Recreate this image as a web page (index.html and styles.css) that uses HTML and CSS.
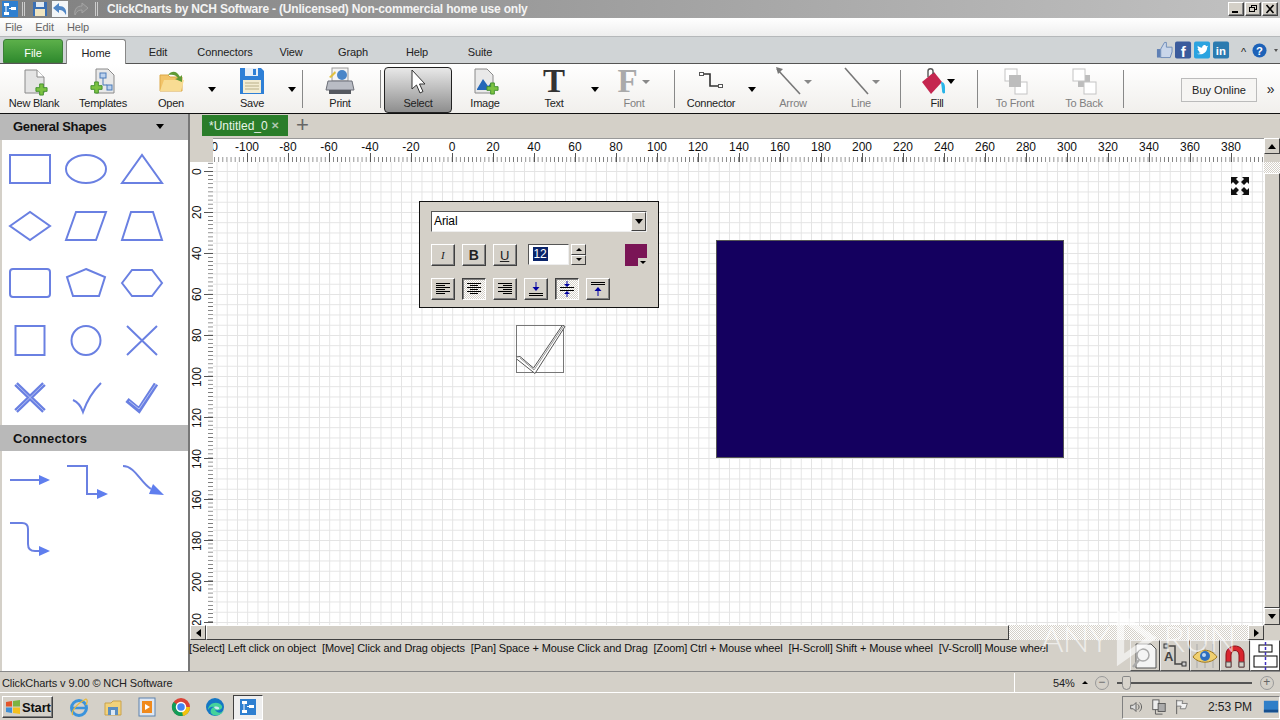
FILE: index.html
```html
<!DOCTYPE html>
<html>
  <head>
    <meta charset="UTF-8" />
    <title>ClickCharts</title>
    <link rel="stylesheet" href="styles.css">
  </head>

  <body>
    <svg class="defs" width="0" height="0">
      <symbol id="app-icon" viewBox="0 0 16 16">
        <rect width="16" height="16" fill="#2f7fd0"/>
        <rect x="2" y="2" width="5" height="3" fill="#fff"/>
        <rect x="9" y="6" width="5" height="3" fill="#fff"/>
        <rect x="2" y="11" width="5" height="3" fill="#fff"/>
        <path d="M4 5V11M7 7.5H9" stroke="#fff"/>
      </symbol>
      <symbol id="plus" viewBox="0 0 14 14">
        <path d="M5 1H9V5H13V9H9V13H5V9H1V5H5Z" fill="#7cc242" stroke="#3f8f2a"/>
      </symbol>
    </svg>

    <div class="app">
      <div class="titlebar">
        <svg class="tb-icon" viewBox="0 0 16 16"><use href="#app-icon"/></svg>
        <span class="tb-sep"></span>
        <svg class="tb-icon" viewBox="0 0 16 16">
          <rect x="1" y="1" width="14" height="14" fill="#3a6fb5"/>
          <rect x="4" y="1" width="8" height="5" fill="#dfe8f2"/>
          <rect x="3" y="8" width="10" height="7" fill="#f0e4c0"/>
        </svg>
        <svg class="tb-icon tb-undo" viewBox="0 0 16 16">
          <rect width="16" height="16" fill="#f2f5f8"/>
          <path d="M1 7L7 2V5C12 5 15 8 14 14C12 10 10 9 7 9V12Z" fill="#4f86c6"/>
        </svg>
        <svg class="tb-icon" viewBox="0 0 16 16">
          <path d="M15 7L9 2V5C4 5 1 8 2 14C4 10 6 9 9 9V12Z" fill="#8b8b8b" stroke="#a5a5a5"/>
        </svg>
        <span class="tb-sep tb-sep-last"></span>
        <span class="title-text">ClickCharts by NCH Software - (Unlicensed) Non-commercial home use only</span>
        <div class="win-btns">
          <button class="win-btn"><svg viewBox="0 0 12 10"><rect x="2" y="7" width="6" height="2"/></svg></button>
          <button class="win-btn"><svg viewBox="0 0 12 10"><path d="M4 1H10V6H8V8H2V3H4ZM5 2V3H8V5H9V2ZM3 4V7H7V4Z" fill-rule="evenodd"/></svg></button>
          <button class="win-btn"><svg viewBox="0 0 12 10"><path d="M2.5 1L9.5 9M9.5 1L2.5 9" stroke="#000" stroke-width="1.6"/></svg></button>
        </div>
      </div>

      <div class="menubar">
        <span>File</span>
        <span>Edit</span>
        <span>Help</span>
      </div>

      <div class="ribbon-tabs">
        <span class="rtab rtab-file">File</span>
        <span class="rtab rtab-home">Home</span>
        <span class="rtab rtab-edit">Edit</span>
        <span class="rtab rtab-conn">Connectors</span>
        <span class="rtab rtab-view">View</span>
        <span class="rtab rtab-graph">Graph</span>
        <span class="rtab rtab-help">Help</span>
        <span class="rtab rtab-suite">Suite</span>
        <div class="social">
          <svg viewBox="0 0 18 18"><path d="M1 8H5V17H1Z" fill="#5f80b5"/><path d="M5 8L9 1H11V6H17V11L15 17H5Z" fill="#c9d6ea" stroke="#6d8bb8"/></svg>
          <svg viewBox="0 0 18 18"><rect width="17" height="18" rx="2" fill="#3b5b9c"/><text x="6" y="16" class="social-f">f</text></svg>
          <svg viewBox="0 0 18 18"><rect width="17" height="18" rx="2" fill="#2aa3e0"/><path d="M3 13C8 15 14 12 14 6L15 4.500L13 5C12 3 9 3 8.500 6.500C6.500 6.500 5 5.500 4 4.500C3.500 6 4 7.500 5 8L3.800 8C4 9.500 5 10 6 10.500L5 10.700C5.500 11.500 6 12 7 12C6 13 4.500 13.200 3 13Z" fill="#fff"/></svg>
          <svg viewBox="0 0 18 18"><rect width="17" height="18" rx="2" fill="#2c7bb0"/><text x="3" y="14" class="social-in">in</text></svg>
          <span class="caret-up">^</span>
          <svg class="help-icon" viewBox="0 0 16 16"><circle cx="8" cy="8" r="7.500" fill="#1d62b8"/><text x="8" y="12.500" class="help-q">?</text></svg>
          <span class="tri tri-small"></span>
        </div>
      </div>

      <div class="toolbar">
        <div class="tool">
          <div class="tool-icon">
            <svg width="32" height="30" viewBox="0 0 32 30">
              <path d="M7 4H19L26 11V27H7Z" fill="#e4e4e4" stroke="#8a8a8a"/>
              <path d="M19 4V11H26" fill="#fff" stroke="#8a8a8a"/>
              <use href="#plus" x="17" y="17" width="13" height="13"/>
            </svg>
          </div>
          <span>New Blank</span>
        </div>
        <div class="tool">
          <div class="tool-icon">
            <svg width="32" height="30" viewBox="0 0 32 30">
              <path d="M9 3H21L27 9V27H9Z" fill="#e8e8e8" stroke="#8a8a8a"/>
              <rect x="13" y="7" width="6" height="5" fill="#bcd2ee" stroke="#4a7ab8"/>
              <rect x="20" y="19" width="5" height="5" fill="#bcd2ee" stroke="#4a7ab8"/>
              <path d="M16 12V19H20" fill="none" stroke="#4a7ab8"/>
              <use href="#plus" x="3" y="15" width="13" height="13"/>
            </svg>
          </div>
          <span>Templates</span>
        </div>
        <div class="tool">
          <div class="tool-icon">
            <svg width="32" height="30" viewBox="0 0 32 30">
              <path d="M5 9H13L15 11H27V25H5Z" fill="#f2c469" stroke="#dca848"/>
              <path d="M5 25L9 14H29L26 25Z" fill="#f8dc93"/>
              <path d="M13 9C17 4 22 5 25 11L27 9L27 16L20 13L23 12C21 9 18 8 13 9Z" fill="#5f9a35"/>
            </svg>
          </div>
          <span>Open</span>
        </div>
        <span class="tri"></span>
        <div class="tool">
          <div class="tool-icon">
            <svg width="32" height="30" viewBox="0 0 32 30">
              <path d="M4 2H25L28 5V28H4Z" fill="#2e7fd6"/>
              <rect x="9" y="2" width="13" height="8" fill="#e6eef7"/>
              <rect x="17" y="3" width="3" height="6" fill="#2e7fd6"/>
              <rect x="7" y="14" width="18" height="13" fill="#f3ecd2"/>
              <path d="M9 17H23M9 20H23M9 23H23" stroke="#b9b08a"/>
            </svg>
          </div>
          <span>Save</span>
        </div>
        <span class="tri"></span>
        <span class="tool-sep"></span>
        <div class="tool">
          <div class="tool-icon">
            <svg width="32" height="30" viewBox="0 0 32 30">
              <rect x="8" y="2" width="16" height="13" fill="#f4f4f4" stroke="#9a9a9a"/>
              <circle cx="18" cy="9" r="5" fill="#4a86c8"/>
              <path d="M4 15H28L30 24H2Z" fill="#b9bcc4" stroke="#6c6f78"/>
              <rect x="5" y="24" width="22" height="4" fill="#55585f"/>
              <path d="M5 11L11 5L12 7L7 12Z" fill="#e0c040"/>
            </svg>
          </div>
          <span>Print</span>
        </div>
        <span class="tool-sep"></span>
        <div class="tool tool-active">
          <div class="tool-icon">
            <svg width="32" height="30" viewBox="0 0 32 30">
              <path d="M10 3V22L14.500 18L18 26L21 24.500L17.500 17H23Z" fill="#fff" stroke="#333"/>
            </svg>
          </div>
          <span>Select</span>
        </div>
        <div class="tool">
          <div class="tool-icon">
            <svg width="32" height="30" viewBox="0 0 32 30">
              <path d="M6 3H18L24 9V27H6Z" fill="#e9e9e9" stroke="#8a8a8a"/>
              <path d="M8 23L14 13L19 20L22 17V24H8Z" fill="#2467b8"/>
              <use href="#plus" x="17" y="16" width="13" height="13"/>
            </svg>
          </div>
          <span>Image</span>
        </div>
        <div class="tool">
          <div class="tool-icon"><span class="glyph-t">T</span></div>
          <span>Text</span>
        </div>
        <span class="tri"></span>
        <div class="tool tool-off">
          <div class="tool-icon tool-icon-dd"><span class="glyph-f">F</span><span class="tri tri-gray"></span></div>
          <span>Font</span>
        </div>
        <span class="tool-sep"></span>
        <div class="tool">
          <div class="tool-icon">
            <svg width="26" height="20" viewBox="0 0 26 20">
              <path d="M5 3H12V15H21" fill="none" stroke="#333" stroke-width="1.600"/>
              <rect x="1.500" y="1.500" width="4" height="3" fill="#fff" stroke="#555"/>
              <rect x="20.500" y="13.500" width="4" height="3" fill="#fff" stroke="#555"/>
            </svg>
          </div>
          <span>Connector</span>
        </div>
        <span class="tri"></span>
        <div class="tool tool-off">
          <div class="tool-icon tool-icon-dd">
            <svg width="28" height="30" viewBox="0 0 28 30">
              <path d="M2 3L25 28" stroke="#777" stroke-width="1.600"/>
              <path d="M1 1L8 3L3 8Z" fill="#777"/>
            </svg>
            <span class="tri tri-gray"></span>
          </div>
          <span>Arrow</span>
        </div>
        <div class="tool tool-off">
          <div class="tool-icon tool-icon-dd">
            <svg width="28" height="30" viewBox="0 0 28 30">
              <path d="M2 2L25 28" stroke="#777" stroke-width="1.600"/>
            </svg>
            <span class="tri tri-gray"></span>
          </div>
          <span>Line</span>
        </div>
        <span class="tool-sep"></span>
        <div class="tool">
          <div class="tool-icon tool-icon-dd">
            <svg width="26" height="30" viewBox="0 0 26 30">
              <path d="M2 16L14 6L22 16L11 28Z" fill="#c5264f"/>
              <path d="M8 11V5C8 2 13 2 13 5V8" fill="none" stroke="#555" stroke-width="1.400"/>
              <path d="M21 16C26 16 25 22 25 27C23 28 22 27 22 24Z" fill="#29b4e8"/>
            </svg>
            <span class="tri"></span>
          </div>
          <span>Fill</span>
        </div>
        <span class="tool-sep"></span>
        <div class="tool tool-off">
          <div class="tool-icon">
            <svg width="32" height="30" viewBox="0 0 32 30">
              <rect x="6" y="3" width="12" height="12" fill="#fff" stroke="#c4c4c4"/>
              <rect x="16" y="16" width="12" height="12" fill="#fff" stroke="#c4c4c4"/>
              <rect x="10" y="9" width="12" height="12" fill="#bdbdbd"/>
            </svg>
          </div>
          <span>To Front</span>
        </div>
        <div class="tool tool-off">
          <div class="tool-icon">
            <svg width="32" height="30" viewBox="0 0 32 30">
              <rect x="10" y="9" width="12" height="12" fill="#bdbdbd"/>
              <rect x="5" y="3" width="12" height="12" fill="#fff" stroke="#c4c4c4"/>
              <rect x="16" y="16" width="12" height="12" fill="#fff" stroke="#c4c4c4"/>
            </svg>
          </div>
          <span>To Back</span>
        </div>
        <span class="tool-sep"></span>
        <span></span>
        <button class="buy-btn">Buy Online</button>
        <span></span>
        <span class="more">»</span>
      </div>

      <div class="main">
        <aside class="sidebar">
          <div class="side-head">General Shapes<span class="tri"></span></div>
          <div class="shape-grid">
            <svg viewBox="0 0 44 44"><rect x="2" y="8" width="40" height="28"/></svg>
            <svg viewBox="0 0 44 44"><ellipse cx="22" cy="22" rx="20" ry="14"/></svg>
            <svg viewBox="0 0 44 44"><path d="M2 36L22 8L42 36Z"/></svg>
            <svg viewBox="0 0 44 44"><path d="M2 22L22 8L42 22L22 36Z"/></svg>
            <svg viewBox="0 0 44 44"><path d="M2 36L12 8H42L32 36Z"/></svg>
            <svg viewBox="0 0 44 44"><path d="M2 36L11 8H33L42 36Z"/></svg>
            <svg viewBox="0 0 44 44"><rect x="2" y="8" width="40" height="28" rx="3"/></svg>
            <svg viewBox="0 0 44 44"><path d="M22 8L41 16L35 35H9L3 16Z"/></svg>
            <svg viewBox="0 0 44 44"><path d="M2 22L12 9H32L42 22L32 35H12Z"/></svg>
            <svg viewBox="0 0 44 44"><rect x="7.500" y="8" width="29" height="29"/></svg>
            <svg viewBox="0 0 44 44"><circle cx="22" cy="22.500" r="14.500"/></svg>
            <svg viewBox="0 0 44 44"><path d="M7 8L37 37M37 8L7 37"/></svg>
            <svg viewBox="0 0 44 44"><path class="thick" d="M8 9L36 36M36 9L8 36"/><path class="core" d="M8 9L36 36M36 9L8 36"/></svg>
            <svg viewBox="0 0 44 44"><path d="M9 25Q16 28 19 37Q25 20 37 8"/></svg>
            <svg viewBox="0 0 44 44"><path class="thick" d="M7 25L19 35L36 9"/><path class="core" d="M9 26L19 34L36 9"/></svg>
          </div>
          <div class="side-head side-head-conn">Connectors</div>
          <div class="shape-grid">
            <svg viewBox="0 0 44 44"><path d="M2 22H32"/><path class="head" d="M31 17L42 22L31 27Z"/></svg>
            <svg viewBox="0 0 44 44"><path d="M3 8H23V36H33"/><path class="head" d="M33 31L44 36L33 41Z"/></svg>
            <svg viewBox="0 0 44 44"><path d="M3 8C15 8 20 24 31 31"/><path class="head" d="M33 26L44 37L29 36Z"/></svg>
            <svg viewBox="0 0 44 44"><path d="M2 8H14Q20 8 20 14V29Q20 36 27 36H32"/><path class="head" d="M31 31L42 36L31 41Z"/></svg>
          </div>
        </aside>

        <div class="work">
          <div class="doc-tabs">
            <div class="doc-tab">*Untitled_0<span class="doc-close">✕</span></div>
            <span class="doc-add">+</span>
          </div>

          <div class="ruler-row">
            <div class="ruler-corner"></div>
            <div class="ruler-h">
              <span>-120</span><span>-100</span><span>-80</span><span>-60</span><span>-40</span><span>-20</span><span>0</span>
              <span>20</span><span>40</span><span>60</span><span>80</span><span>100</span><span>120</span><span>140</span>
              <span>160</span><span>180</span><span>200</span><span>220</span><span>240</span><span>260</span><span>280</span>
              <span>300</span><span>320</span><span>340</span><span>360</span><span>380</span>
            </div>
            <div class="vscroll-btn-up"><span class="arr-up"></span></div>
          </div>

          <div class="canvas-row">
            <div class="ruler-v">
              <span>0</span><span>20</span><span>40</span><span>60</span><span>80</span><span>100</span>
              <span>120</span><span>140</span><span>160</span><span>180</span><span>200</span><span>220</span>
            </div>

            <div class="canvas">
              <div class="format-panel">
                <div class="combo">
                  <span class="combo-text">Arial</span>
                  <span class="combo-arrow"><span class="arr-down"></span></span>
                </div>
                <div class="fp-row">
                  <button class="fp-btn fp-i">I</button>
                  <button class="fp-btn fp-b">B</button>
                  <button class="fp-btn fp-u">U</button>
                  <div class="size-box"><span class="size-sel">12</span></div>
                  <div class="spin">
                    <span class="spin-btn"><span class="arr-up arr-tiny"></span></span>
                    <span class="spin-btn"><span class="arr-down arr-tiny"></span></span>
                  </div>
                  <div class="swatch"><span class="swatch-dd"><span class="arr-down arr-tiny"></span></span></div>
                </div>
                <div class="fp-row">
                  <button class="fp-btn">
                    <svg viewBox="0 0 16 14"><path d="M1 1.500H15M1 3.500H10M1 5.500H15M1 7.500H10M1 9.500H15M1 11.500H10" stroke="#000"/></svg>
                  </button>
                  <button class="fp-btn fp-on">
                    <svg viewBox="0 0 16 14"><path d="M1 1.500H15M4 3.500H12M1 5.500H15M4 7.500H12M1 9.500H15M4 11.500H12" stroke="#000"/></svg>
                  </button>
                  <button class="fp-btn">
                    <svg viewBox="0 0 16 14"><path d="M1 1.500H15M6 3.500H15M1 5.500H15M6 7.500H15M1 9.500H15M6 11.500H15" stroke="#000"/></svg>
                  </button>
                  <button class="fp-btn">
                    <svg viewBox="0 0 16 16"><path d="M1 12.500H15M1 14.500H15" stroke="#000"/><path d="M8 1V9" stroke="#0000a0"/><path d="M4.500 6H11.500L8 10Z" fill="#0000a0"/></svg>
                  </button>
                  <button class="fp-btn fp-on">
                    <svg viewBox="0 0 16 16"><path d="M1 6.500H15M1 9.500H15" stroke="#000"/><path d="M8 0V5M8 11V16" stroke="#0000a0"/><path d="M5 3H11L8 6ZM5 13H11L8 10Z" fill="#0000a0"/></svg>
                  </button>
                  <button class="fp-btn">
                    <svg viewBox="0 0 16 16"><path d="M1 1.500H15M1 3.500H15" stroke="#000"/><path d="M8 7V15" stroke="#0000a0"/><path d="M4.500 10H11.500L8 6Z" fill="#0000a0"/></svg>
                  </button>
                </div>
              </div>

              <div class="check-object">
                <svg width="50" height="50" viewBox="0 0 50 50">
                  <path d="M0 32L4 31.500L17.500 43L46.500 0L49 1.500L19 48.500L0 33.500Z" fill="#fff" stroke="#555"/>
                  <path d="M4 33L18 45L47.500 1" fill="none" stroke="#999"/>
                </svg>
              </div>

              <div class="navy-rect"></div>

              <svg class="fit-icon" viewBox="0 0 20 20">
                <path d="M1 1H8L6 3L9 6L6 9L3 6L1 8ZM19 1V8L17 6L14 9L11 6L14 3L12 1ZM1 19V12L3 14L6 11L9 14L6 17L8 19ZM19 19H12L14 17L11 14L14 11L17 14L19 12Z"/>
              </svg>
            </div>

            <div class="vscroll">
              <div class="vscroll-track"></div>
              <div class="vscroll-thumb"></div>
              <div class="vscroll-btn"><span class="arr-down"></span></div>
            </div>
          </div>

          <div class="hscroll">
            <div class="hs-btn"><span class="arr-left"></span></div>
            <div class="hs-thumb"></div>
            <div class="hs-track"></div>
            <div class="hs-btn"><span class="arr-right"></span></div>
            <div class="hs-corner"></div>
          </div>

          <div class="hint-row">
            <span class="hint-text">[Select] Left click on object  [Move] Click and Drag objects  [Pan] Space + Mouse Click and Drag  [Zoom] Ctrl + Mouse wheel  [H-Scroll] Shift + Mouse wheel  [V-Scroll] Mouse wheel</span>
            <div class="hint-tools">
              <div class="ht-btn">
                <svg viewBox="0 0 26 28">
                  <path d="M4 2H19L24 7V26H4Z" fill="#f4f4f4" stroke="#555"/>
                  <circle cx="11" cy="13" r="6" fill="none" stroke="#aaa" stroke-width="1.500"/>
                  <path d="M7 18L1 25" stroke="#aaa" stroke-width="2.500"/>
                </svg>
              </div>
              <div class="ht-btn">
                <svg viewBox="0 0 26 28">
                  <path d="M5 4H13V22H21" fill="none" stroke="#444" stroke-width="1.500"/>
                  <rect x="2" y="2" width="4" height="4" fill="#ccc" stroke="#333"/>
                  <rect x="20" y="20" width="4" height="4" fill="#ccc" stroke="#333"/>
                  <text x="2" y="19" class="ht-a">A</text>
                </svg>
              </div>
              <div class="ht-btn">
                <svg viewBox="0 0 26 28">
                  <path d="M5 2V26M13 2V26M21 2V26" stroke="#aaa"/>
                  <path d="M1 15C7 6 19 6 25 15C19 22 7 22 1 15Z" fill="#f0d070" stroke="#a07a20"/>
                  <circle cx="13" cy="14" r="5" fill="#2f6fc0"/>
                  <circle cx="12" cy="13" r="2" fill="#bcd8f5"/>
                </svg>
              </div>
              <div class="ht-btn">
                <svg viewBox="0 0 26 28">
                  <path d="M4 25V13C4 1 22 1 22 13V25H17V13C17 7 9 7 9 13V25Z" fill="#d8262f" stroke="#8a1018"/>
                  <rect x="4" y="20" width="5" height="5" fill="#d4d0c8" stroke="#555"/>
                  <rect x="17" y="20" width="5" height="5" fill="#d4d0c8" stroke="#555"/>
                </svg>
              </div>
              <div class="ht-btn ht-on">
                <svg viewBox="0 0 26 28">
                  <rect x="7" y="3" width="13" height="7" fill="#fff" stroke="#000"/>
                  <rect x="2" y="14" width="23" height="11" fill="#fff" stroke="#000"/>
                  <path d="M13.500 0V28" stroke="#4030c0" stroke-dasharray="3 2" stroke-width="1.500"/>
                </svg>
              </div>
            </div>
          </div>
        </div>
      </div>

      <div class="statusbar">
        <span class="status-text">ClickCharts v 9.00 © NCH Software</span>
        <div class="status-zoom">
          <span class="zoom-val">54%</span>
          <span class="arr-up arr-tiny"></span>
          <span class="zoom-circle">−</span>
          <div class="zoom-track"><span class="zoom-thumb"></span></div>
          <span class="zoom-circle">+</span>
        </div>
      </div>

      <div class="taskbar">
        <button class="start-btn">
          <svg viewBox="0 0 16 16">
            <path d="M1 3L7 2V7.500H1Z" fill="#e2552b"/>
            <path d="M8 2L15 1V7.500H8Z" fill="#7cb342"/>
            <path d="M1 8.500H7V14L1 13Z" fill="#3f8fd6"/>
            <path d="M8 8.500H15V15L8 14Z" fill="#f4c01e"/>
          </svg>
          Start
        </button>
        <div class="quick">
          <svg viewBox="0 0 20 20">
            <circle cx="10" cy="11" r="7.500" fill="none" stroke="#3a93dc" stroke-width="3"/>
            <path d="M3 11H17" stroke="#3a93dc" stroke-width="2.500"/>
            <path d="M4 18C1 16 7 7 17 2C19 3 18 6 17 8" fill="none" stroke="#e8b93a" stroke-width="1.200"/>
          </svg>
          <svg viewBox="0 0 20 20">
            <path d="M2 6H8L10 4H18V18H2Z" fill="#f2d27a" stroke="#c9a24c"/>
            <rect x="5" y="10" width="10" height="8" fill="#5c8ec0"/>
            <rect x="8" y="13" width="4" height="5" fill="#dbe8f4"/>
          </svg>
          <svg viewBox="0 0 20 20">
            <rect x="2" y="1" width="16" height="18" fill="#dfe7f2" stroke="#5c82ad"/>
            <rect x="5" y="4" width="10" height="12" fill="#f08a1d"/>
            <path d="M8 7L13 10L8 13Z" fill="#fff"/>
          </svg>
          <svg viewBox="0 0 20 20">
            <circle cx="10" cy="10" r="9" fill="#db4437"/>
            <path d="M10 10L2.500 15A9 9 0 0 1 2.500 5Z" fill="#0f9d58"/>
            <path d="M10 10L2.500 15A9 9 0 0 0 18.500 13Z" fill="#0f9d58"/>
            <path d="M10 10L19 10A9 9 0 0 1 12 19Z" fill="#f4c20d"/>
            <circle cx="10" cy="10" r="4.500" fill="#4285f4" stroke="#fff" stroke-width="1.500"/>
          </svg>
          <svg viewBox="0 0 20 20">
            <circle cx="10" cy="10" r="9" fill="#1577c4"/>
            <path d="M3 13C3 6 13 3 17 9C18 12 14 14 10 13C13 17 17 16 19 13C17 19 8 20 6 16C5 14 6 11 9 10C6 9 4 11 3 13Z" fill="#45d29b"/>
            <path d="M9 10C12 9 15 10 14 12C12 13 10 12 9 10Z" fill="#d4e8f4"/>
          </svg>
        </div>
        <div class="task-app"><svg viewBox="0 0 16 16"><use href="#app-icon"/></svg></div>
        <div class="tray">
          <svg viewBox="0 0 18 18"><path d="M3 7H6L9 4V14L6 11H3Z" fill="#ddd" stroke="#555"/><path d="M11 6C13 8 13 10 11 12M13 4C16 7 16 11 13 14" fill="none" stroke="#555"/></svg>
          <svg viewBox="0 0 18 18"><rect x="2" y="1" width="7" height="11" fill="#eee" stroke="#555"/><rect x="8" y="5" width="8" height="9" fill="#aaa" stroke="#555"/><path d="M5 12V17H13" fill="none" stroke="#555"/></svg>
          <svg viewBox="0 0 18 18"><path d="M3 1V17" stroke="#555"/><path d="M3 2H10L9 5H15L13 11H7L8 8H3Z" fill="#f2f2f2" stroke="#777"/></svg>
          <span class="clock">2:53 PM</span>
          <svg class="tray-desk" viewBox="0 0 18 18"><rect x="1" y="2" width="16" height="13" fill="#2f7fc8"/><rect x="1" y="12" width="16" height="3" fill="#174f8e"/></svg>
        </div>
      </div>

      <div class="watermark">
        <span>ANY</span>
        <svg width="50" height="60" viewBox="0 0 54 66"><path d="M6 2L50 33L6 64ZM14 16V50L38 33Z" fill="#fff" fill-rule="evenodd"/></svg>
        <span>RUN</span>
      </div>
    </div>
  </body>
</html>
```

FILE: styles.css
```css
* {
  box-sizing: border-box;
}
html,
body {
  margin: 0;
  padding: 0;
}
body {
  font-family: 'Liberation Sans', Arial, sans-serif;
  font-size: 11px;
  letter-spacing: -0.1px;
  color: #222;
  background: #d4d0c8;
}
button {
  font-family: inherit;
  padding: 0;
}
.defs {
  position: absolute;
}
.app {
  position: relative;
  width: 1280px;
  height: 720px;
  display: flex;
  flex-direction: column;
  overflow: hidden;
}

/* triangles */
.tri {
  width: 0;
  height: 0;
  border-left: 4.5px solid transparent;
  border-right: 4.5px solid transparent;
  border-top: 5px solid #000;
  justify-self: center;
  align-self: center;
}
.tri-gray {
  border-top-color: #888;
  border-left-width: 4px;
  border-right-width: 4px;
  border-top-width: 4px;
}
.tri-small {
  border-left-width: 2.5px;
  border-right-width: 2.5px;
  border-top: 3px solid #555;
  margin: 0 0 0 5px;
}
.arr-up,
.arr-down,
.arr-left,
.arr-right {
  display: block;
  width: 0;
  height: 0;
  border: 4px solid transparent;
}
.arr-up {
  border-top-width: 0;
  border-bottom: 5px solid #000;
}
.arr-down {
  border-bottom-width: 0;
  border-top: 5px solid #000;
}
.arr-left {
  border-left-width: 0;
  border-right: 5px solid #000;
}
.arr-right {
  border-right-width: 0;
  border-left: 5px solid #000;
}
.arr-tiny {
  border-left-width: 3px;
  border-right-width: 3px;
  border-top-width: 0;
  border-bottom-width: 3px;
}
.arr-tiny.arr-down {
  border-top-width: 3px;
  border-bottom-width: 0;
}

/* title bar */
.titlebar {
  height: 18px;
  flex: none;
  display: flex;
  align-items: center;
  background: linear-gradient(to right, #808080, #c2c2c2);
  padding-left: 2px;
}
.tb-icon {
  width: 16px;
  height: 16px;
  flex: none;
}
.tb-sep {
  width: 3px;
  height: 14px;
  margin: 0 7px 0 4px;
  border-left: 1px solid #ccc;
  border-right: 1px solid #ccc;
}
.tb-undo {
  margin: 0 5px 0 4px;
}
.tb-icon + .tb-sep-last {
  margin-left: 6px;
  margin-right: 9px;
}
.title-text {
  font-weight: bold;
  font-size: 12px;
  letter-spacing: -0.2px;
  color: #f4f4f4;
  white-space: nowrap;
}
.win-btns {
  margin-left: auto;
  display: flex;
  gap: 1px;
  padding-right: 2px;
}
.win-btn {
  width: 16px;
  height: 14px;
  background: #d4d0c8;
  border: 1px solid;
  border-color: #fff #404040 #404040 #fff;
  box-shadow: inset -1px -1px #808080;
  display: flex;
  align-items: center;
  justify-content: center;
}
.win-btn svg {
  width: 12px;
  height: 10px;
}

/* menu */
.menubar {
  height: 19px;
  flex: none;
  display: flex;
  align-items: center;
  gap: 13px;
  padding-left: 5px;
  color: #666;
  background: linear-gradient(#fff, #eee);
  border-bottom: 1px solid #b5b8ba;
}

/* ribbon tabs */
.ribbon-tabs {
  height: 27px;
  flex: none;
  display: flex;
  align-items: flex-end;
  background: #d0d4d6;
  border-bottom: 1px solid #555;
  padding-left: 3px;
}
.rtab {
  height: 24px;
  line-height: 26px;
  text-align: center;
  flex: none;
}
.rtab-file {
  width: 60px;
  margin-right: 3px;
  color: #fff;
  background: linear-gradient(#5cb04a, #2f8a2e);
  border-radius: 3px 3px 0 0;
  border: 1px solid #3b7f37;
}
.rtab-home {
  width: 60px;
  height: 25px;
  margin-bottom: -1px;
  background: #fff;
  border: 1px solid #888;
  border-bottom: none;
  border-radius: 3px 3px 0 0;
}
.rtab-edit {
  width: 64px;
}
.rtab-conn {
  width: 70px;
}
.rtab-view {
  width: 62px;
}
.rtab-graph {
  width: 62px;
}
.rtab-help {
  width: 66px;
}
.rtab-suite {
  width: 60px;
}
.social {
  margin-left: auto;
  display: flex;
  align-items: center;
  gap: 2px;
  height: 26px;
  padding-right: 2px;
}
.social svg {
  width: 17px;
  height: 18px;
}
.social-f {
  font: bold 16px 'Liberation Sans', sans-serif;
  fill: #fff;
}
.social-in {
  font: bold 12px 'Liberation Sans', sans-serif;
  fill: #fff;
}
.caret-up {
  margin: 4px 4px 0 9px;
  font-size: 11px;
}
.social .help-icon {
  width: 15px;
  height: 15px;
}
.help-q {
  font: bold 12px 'Liberation Sans', sans-serif;
  fill: #fff;
  text-anchor: middle;
}

/* toolbar */
.toolbar {
  height: 50px;
  flex: none;
  display: grid;
  grid-template-columns:
    68px 70px 66px 16px 64px 16px 4px 72px 8px 68px 66px 72px 10px 68px 12px 62px 20px 62px 74px 4px
    70px 10px 66px 72px 6px 55px 76px 4px 19px;
  background: linear-gradient(#fff, #f1efec);
  border-bottom: 1px solid #111;
}
.tool {
  display: flex;
  flex-direction: column;
  align-items: center;
  justify-content: flex-end;
  padding-bottom: 4px;
  font-size: 11px;
  letter-spacing: -0.25px;
  line-height: 14px;
  color: #222;
}
.tool-off {
  color: #808080;
}
.tool-active {
  margin: 3px 0 1px;
  padding-bottom: 2px;
  border: 1px solid #222;
  border-radius: 4px;
  background: linear-gradient(#e8e8e8, #8e8e8e);
}
.tool-icon {
  height: 31px;
  display: flex;
  align-items: center;
  justify-content: center;
}
.tool-active .tool-icon {
  height: 28px;
}
.tool-icon-dd {
  gap: 1px;
}
.tool-icon-dd .tri {
  margin-top: 2px;
}
.tool-sep {
  width: 1px;
  height: 38px;
  background: #888;
  justify-self: center;
  align-self: center;
}
.glyph-t,
.glyph-f {
  font: bold 33px/28px 'Liberation Serif', serif;
}
.glyph-t {
  color: #333;
}
.glyph-f {
  margin-right: 4px;
  color: #aaa;
}
.buy-btn {
  height: 24px;
  align-self: center;
  margin-top: 1px;
  font-size: 11px;
  color: #222;
  background: #f6f5f3;
  border: 1px solid #bbb;
}
.more {
  align-self: center;
  font-size: 14px;
  text-align: center;
}

/* main area */
.main {
  height: 558px;
  flex: none;
  display: flex;
  border-bottom: 1px solid #888;
}
.sidebar {
  width: 190px;
  flex: none;
  background: #fff;
  border-left: 2px solid #d4d0c8;
  border-right: 2px solid #777;
}
.side-head {
  height: 26px;
  margin-left: -2px;
  padding: 0 24px 1px 13px;
  display: flex;
  align-items: center;
  justify-content: space-between;
  background: #b9b9b9;
  font-size: 13px;
  letter-spacing: -0.35px;
  font-weight: bold;
  color: #111;
}
.side-head-conn {
  padding-bottom: 0;
  letter-spacing: 0.2px;
}
.shape-grid {
  display: grid;
  grid-template-columns: repeat(3, 56px);
  grid-auto-rows: 57px;
  place-items: center;
}
.shape-grid svg {
  width: 44px;
  height: 44px;
  fill: none;
  stroke: #6a80e2;
  stroke-width: 2;
}
.shape-grid .thick {
  stroke-width: 5;
}
.shape-grid .core {
  stroke: #c7d0f6;
  stroke-width: 0.8;
}
.shape-grid .head {
  fill: #5f7eee;
  stroke: none;
}

.work {
  flex: 1;
  min-width: 0;
  display: flex;
  flex-direction: column;
}

/* document tabs */
.doc-tabs {
  height: 24px;
  flex: none;
  display: flex;
  align-items: flex-start;
  padding: 1px 0 0 12px;
  background: #d4d0c8;
}
.doc-tab {
  width: 86px;
  height: 21px;
  padding-left: 7px;
  display: flex;
  align-items: center;
  gap: 3px;
  font-size: 12px;
  letter-spacing: 0;
  background: #2a7d2a;
  color: #e8f4e8;
}
.doc-close {
  color: #b0c8b0;
  font-size: 10px;
  font-weight: bold;
}
.doc-add {
  margin-left: 8px;
  font-size: 22px;
  line-height: 19px;
  color: #666;
}

/* rulers */
.ruler-row {
  height: 24px;
  flex: none;
  display: flex;
}
.ruler-corner {
  width: 23px;
  flex: none;
  background: #d4d0c8;
}
.ruler-h {
  width: 1051px;
  flex: none;
  display: flex;
  overflow: hidden;
  font-size: 12px;
  letter-spacing: 0;
  color: #111;
  border-top: 1px solid #999;
  background-color: #fff;
  background-image:
    linear-gradient(to right, #555 1px, transparent 1px),
    linear-gradient(to right, #777 1px, transparent 1px);
  background-size: 41px 9px, 4.1px 5px;
  background-position: 34px 100%, 34px 100%;
  background-repeat: repeat-x;
}
.ruler-h span {
  flex: none;
  width: 41px;
  text-align: center;
  line-height: 14px;
  margin-top: 1px;
}
.ruler-h span:first-child {
  margin-left: -27.5px;
}
.vscroll-btn-up {
  flex: none;
  width: 16px;
  height: 16px;
  display: flex;
  align-items: center;
  justify-content: center;
  background: #d4d0c8;
  border: 1px solid;
  border-color: #fff #404040 #404040 #fff;
}

.canvas-row {
  height: 463px;
  flex: none;
  display: flex;
}
.ruler-v {
  width: 23px;
  flex: none;
  display: flex;
  flex-direction: column;
  overflow: hidden;
  font-size: 12px;
  letter-spacing: 0;
  color: #111;
  background-color: #fff;
  background-image:
    linear-gradient(to bottom, #555 1px, transparent 1px),
    linear-gradient(to bottom, #777 1px, transparent 1px);
  background-size: 9px 41px, 5px 4.1px;
  background-position: 100% 9px, 100% 9px;
  background-repeat: repeat-y;
}
.ruler-v span {
  flex: none;
  height: 41px;
  width: 14px;
  text-align: center;
  line-height: 14px;
  writing-mode: vertical-rl;
  transform: rotate(180deg);
}
.ruler-v span:first-child {
  margin-top: -11.5px;
}

/* free canvas: objects sit at their drawing coordinates */
.canvas {
  position: relative;
  width: 1051px;
  flex: none;
  overflow: hidden;
  background-color: #fff;
  background-image:
    linear-gradient(to right, #e3e3e3 1px, transparent 1px),
    linear-gradient(to bottom, #e3e3e3 1px, transparent 1px);
  background-size: 10.25px 10.25px;
  background-position: 3.5px 9px;
}
.navy-rect {
  position: absolute;
  left: 503px;
  top: 78px;
  width: 348px;
  height: 218px;
  background: #14005f;
  border: 1px solid #555;
}
.check-object {
  position: absolute;
  left: 303px;
  top: 163px;
  width: 48px;
  height: 48px;
  border: 1px solid #777;
}
.check-object svg {
  position: absolute;
  left: -1px;
  top: -1px;
}
.fit-icon {
  position: absolute;
  left: 1017px;
  top: 14px;
  width: 20px;
  height: 20px;
  fill: #111;
}

/* floating text format panel */
.format-panel {
  position: absolute;
  left: 206px;
  top: 39px;
  width: 240px;
  height: 107px;
  padding: 9px 11px 0;
  display: flex;
  flex-direction: column;
  gap: 12px;
  background: #d4d0c8;
  border: 1px solid #111;
}
.combo {
  width: 216px;
  height: 21px;
  display: flex;
  background: #fff;
  border: 1px solid;
  border-color: #555 #eee #eee #555;
}
.combo-text {
  flex: 1;
  padding-left: 2px;
  line-height: 18px;
  font-size: 12px;
  color: #000;
}
.combo-arrow,
.spin-btn,
.swatch-dd {
  display: flex;
  align-items: center;
  justify-content: center;
  background: #d4d0c8;
  border: 1px solid;
  border-color: #fff #404040 #404040 #fff;
}
.combo-arrow {
  width: 15px;
}
.fp-row {
  height: 22px;
  display: flex;
  gap: 7px;
}
.fp-btn {
  width: 24px;
  height: 22px;
  display: flex;
  align-items: center;
  justify-content: center;
  color: #222;
  background: #d4d0c8;
  border: 1px solid;
  border-color: #fff #404040 #404040 #fff;
  box-shadow: inset -1px -1px #808080;
}
.fp-btn svg {
  width: 16px;
  height: 16px;
}
.fp-on {
  border-color: #404040 #fff #fff #404040;
  box-shadow: inset 1px 1px #808080;
  background: repeating-conic-gradient(#fff 0 25%, #d4d0c8 0 50%) 0 0 / 2px 2px;
}
.fp-i {
  font: italic 11px 'Liberation Serif', serif;
}
.fp-b {
  font: bold 14px 'Liberation Sans', sans-serif;
}
.fp-u {
  font: 13px 'Liberation Sans', sans-serif;
  text-decoration: underline;
}
.size-box {
  width: 42px;
  height: 21px;
  margin-left: 4px;
  padding: 2px 0 0 4px;
  font-size: 12px;
  background: #fff;
  border: 1px solid;
  border-color: #555 #eee #eee #555;
}
.size-sel {
  display: inline-block;
  padding: 0 1px;
  line-height: 14px;
  color: #fff;
  background: #0a246a;
}
.spin {
  width: 15px;
  height: 21px;
  margin-left: -5px;
  display: flex;
  flex-direction: column;
}
.spin-btn {
  flex: 1;
}
.swatch {
  width: 22px;
  height: 22px;
  margin-left: 32px;
  position: relative;
  background: #7a1556;
}
.swatch-dd {
  position: absolute;
  right: 0;
  bottom: 0;
  width: 9px;
  height: 8px;
  border: none;
}

/* scrollbars */
.vscroll {
  width: 16px;
  flex: none;
  display: flex;
  flex-direction: column;
}
.vscroll-track {
  height: 11px;
  flex: none;
  background: repeating-conic-gradient(#fff 0 25%, #d4d0c8 0 50%) 0 0 / 2px 2px;
}
.vscroll-thumb {
  flex: 1;
  background: #d4d0c8;
  border: 1px solid;
  border-color: #fff #404040 #404040 #fff;
}
.vscroll-btn {
  height: 17px;
  flex: none;
  display: flex;
  align-items: center;
  justify-content: center;
  background: #d4d0c8;
  border: 1px solid;
  border-color: #fff #404040 #404040 #fff;
}
.hscroll {
  height: 15px;
  flex: none;
  display: flex;
}
.hs-btn {
  width: 16px;
  flex: none;
  display: flex;
  align-items: center;
  justify-content: center;
  background: #d4d0c8;
  border: 1px solid;
  border-color: #fff #404040 #404040 #fff;
}
.hs-thumb {
  width: 803px;
  flex: none;
  background: #d4d0c8;
  border: 1px solid;
  border-color: #fff #404040 #404040 #fff;
}
.hs-track {
  width: 239px;
  flex: none;
  background: repeating-conic-gradient(#fff 0 25%, #d4d0c8 0 50%) 0 0 / 2px 2px;
}
.hs-corner {
  flex: 1;
  background: #d4d0c8;
}

/* hints */
.hint-row {
  flex: 1;
  display: flex;
  background: #d4d0c8;
  position: relative;
}
.hint-text {
  margin-left: -1px;
  padding-top: 1px;
  font-size: 11px;
  letter-spacing: -0.11px;
  line-height: 15px;
  white-space: pre;
  color: #111;
}
.hint-tools {
  position: absolute;
  right: 0;
  top: 0;
  display: flex;
}
.ht-btn {
  width: 30px;
  height: 31px;
  display: flex;
  align-items: center;
  justify-content: center;
  border: 1px solid;
  border-color: #eee #404040 #555 #eee;
}
.ht-btn svg {
  width: 26px;
  height: 28px;
}
.ht-on {
  background: #fff;
}
.ht-a {
  font: bold 13px 'Liberation Sans', sans-serif;
  fill: #444;
}

/* status bar */
.statusbar {
  height: 21px;
  flex: none;
  display: flex;
  align-items: center;
  justify-content: space-between;
  padding: 1px 0 0 2px;
  border-bottom: 1px solid #fff;
  color: #222;
}
.status-zoom {
  width: 266px;
  height: 20px;
  display: flex;
  align-items: center;
  gap: 4px;
  padding-left: 38px;
  border-left: 1px solid #fff;
}
.zoom-val {
  font-size: 11px;
  margin-right: 3px;
}
.zoom-circle {
  width: 14px;
  height: 14px;
  margin-left: 3px;
  border: 1px solid #999;
  border-radius: 50%;
  text-align: center;
  line-height: 11px;
  font-size: 12px;
  color: #666;
}
.zoom-track {
  position: relative;
  width: 135px;
  height: 2px;
  margin-left: 4px;
  background: #555;
}
.zoom-track + .zoom-circle {
  margin-left: 4px;
}
.zoom-thumb {
  position: absolute;
  left: 5px;
  top: -6px;
  width: 9px;
  height: 14px;
  background: #d8d4cc;
  border: 1px solid #888;
  border-radius: 2px 2px 5px 5px;
}

/* task bar */
.taskbar {
  flex: 1;
  display: flex;
  align-items: center;
  padding: 1px 0 0 2px;
  background: #d4d0c8;
}
.start-btn {
  width: 51px;
  height: 22px;
  display: flex;
  align-items: center;
  gap: 1px;
  padding-left: 2px;
  font-size: 13px;
  font-weight: bold;
  letter-spacing: -0.2px;
  color: #111;
  background: #d4d0c8;
  border: 1px solid;
  border-color: #fff #404040 #404040 #fff;
  box-shadow: inset -1px -1px #808080;
}
.start-btn svg {
  width: 16px;
  height: 16px;
}
.quick {
  display: flex;
  gap: 14px;
  margin-left: 16px;
}
.quick svg {
  width: 20px;
  height: 20px;
}
.task-app {
  width: 30px;
  height: 25px;
  margin-left: 8px;
  display: flex;
  align-items: center;
  justify-content: center;
  background: #eee;
  border: 1px solid;
  border-color: #404040 #fff #fff #404040;
}
.task-app svg {
  width: 16px;
  height: 16px;
}
.tray {
  margin-left: auto;
  width: 158px;
  height: 23px;
  display: flex;
  align-items: center;
  gap: 7px;
  padding-left: 5px;
  border: 1px solid;
  border-color: #808080 #fff #fff #808080;
}
.tray svg {
  width: 18px;
  height: 18px;
}
.clock {
  margin-left: 11px;
  font-size: 12px;
  white-space: nowrap;
}
.tray .tray-desk {
  margin-left: 4px;
}

/* watermark */
.watermark {
  position: absolute;
  left: 1040px;
  top: 608px;
  display: flex;
  align-items: center;
  gap: 2px;
  font: 300 36px/60px Lato, sans-serif;
  letter-spacing: -1px;
  color: #fff;
  opacity: 0.6;
  pointer-events: none;
}
```
